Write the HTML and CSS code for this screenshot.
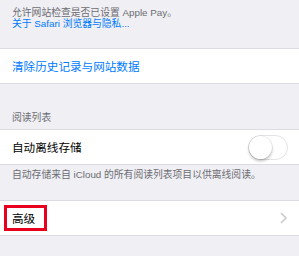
FILE: index.html
```html
<!DOCTYPE html>
<html lang="zh-CN">
<head>
    <meta charset="UTF-8">
    <meta name="viewport" content="width=device-width, initial-scale=1.0">
    <title>Safari 设置</title>
    <link rel="stylesheet" href="styles.css">
</head>
<body>
    <div class="note note-top">
        <div>允许网站检查是否已设置 Apple Pay。</div>
        <div class="link">关于 Safari 浏览器与隐私...</div>
    </div>

    <div class="cell">
        <span class="link cell-label">清除历史记录与网站数据</span>
    </div>

    <div class="section-header">阅读列表</div>

    <div class="cell">
        <span class="cell-label">自动离线存储</span>
        <div class="toggle"><div class="knob"></div></div>
    </div>

    <div class="note note-footer">自动存储来自 iCloud 的所有阅读列表项目以供离线阅读。</div>

    <div class="cell">
        <span class="cell-label highlight">高级</span>
        <svg class="chevron" width="7" height="12" viewBox="0 0 7 12">
            <path d="M1 1 L6 6 L1 11" fill="none" stroke="#c7c7cc" stroke-width="1.5"/>
        </svg>
    </div>
</body>
</html>
```

FILE: styles.css
```css
* {
    margin: 0;
    padding: 0;
    box-sizing: border-box;
}

body {
    background: #efeff4;
    font-family: 'Liberation Sans', 'Noto Sans CJK SC', sans-serif;
    overflow: hidden;
}

.note {
    color: #6d6d72;
    font-size: 9.8px;
    padding-left: 12px;
    padding-right: 12px;
}

.note-top {
    height: 48px;
    padding-top: 7px;
    line-height: 11px;
}

.link {
    color: #007aff;
}

.cell {
    height: 36px;
    background: #fff;
    border-top: 1px solid #dcdce0;
    border-bottom: 1px solid #dcdce0;
    display: flex;
    align-items: center;
    justify-content: space-between;
    padding-left: 12px;
    padding-right: 12px;
}

.cell-label {
    font-size: 11.6px;
    color: #000;
}

.cell-label.link {
    color: #007aff;
}

.section-header {
    height: 45px;
    display: flex;
    align-items: flex-end;
    padding: 0 0 5px 12px;
    font-size: 9.8px;
    line-height: 12px;
    color: #6d6d72;
}

.note-footer {
    height: 35px;
    padding-top: 4px;
    line-height: 12px;
}

.toggle {
    width: 40px;
    height: 25px;
    border-radius: 13px;
    border: 1px solid #e3e3e6;
    background: #fff;
    position: relative;
    margin-right: -1px;
}

.knob {
    position: absolute;
    left: 0;
    top: 0;
    width: 23px;
    height: 23px;
    border-radius: 50%;
    background: #fff;
    box-shadow: 0 2px 3px rgba(0, 0, 0, 0.25), 0 0 0 0.5px rgba(0, 0, 0, 0.1);
}

.highlight {
    position: relative;
}

.highlight::before {
    content: "";
    position: absolute;
    left: -8px;
    right: -12px;
    top: -5px;
    bottom: -5px;
    border: 3px solid #e8001c;
}

.chevron {
    display: block;
}
```
